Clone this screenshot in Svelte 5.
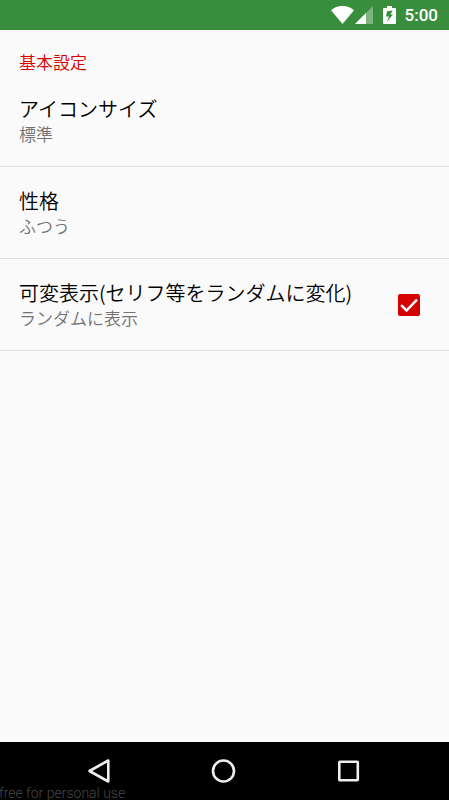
<script lang="js">
	let randomDisplay = true;

	const items = [
		{ title: 'アイコンサイズ', summary: '標準' },
		{ title: '性格', summary: 'ふつう' }
	];
</script>

<div class="screen">
	<header class="status">
		<svg class="wifi" width="23" height="18" viewBox="0 0 23 18" aria-hidden="true">
			<path d="M11.5 18L0 4.2C3 1.6 7 0 11.5 0S20 1.6 23 4.2z" />
		</svg>
		<svg class="signal" width="18" height="18" viewBox="0 0 18 18" aria-hidden="true">
			<path class="faint" d="M18 0v18H0z" />
			<path d="M11 7v11H0z" />
		</svg>
		<svg class="battery" width="13" height="18" viewBox="0 0 13 18" aria-hidden="true">
			<path
				fill-rule="evenodd"
				d="M4 0h5v2h3q1 0 1 1v14q0 1-1 1H1q-1 0-1-1V3q0-1 1-1h3zM9.5 4.6L4 5.2 3 10.6h3l-2 5.2L10 8.4H7.6z"
			/>
		</svg>
		<time>5:00</time>
	</header>

	<main>
		<h1>基本設定</h1>
		{#each items as item}
			<button class="row" type="button">
				<span class="texts">
					<span class="title">{item.title}</span>
					<span class="summary">{item.summary}</span>
				</span>
			</button>
		{/each}
		<label class="row">
			<span class="texts">
				<span class="title">可変表示(セリフ等をランダムに変化)</span>
				<span class="summary">ランダムに表示</span>
			</span>
			<span class="check">
				<input type="checkbox" bind:checked={randomDisplay} />
				{#if randomDisplay}
					<svg width="22" height="22" viewBox="0 0 22 22" aria-hidden="true">
						<path d="M3.2 11.2l5.3 5.3L19 5.6" />
					</svg>
				{/if}
			</span>
		</label>
	</main>

	<nav>
		<button type="button" aria-label="戻る">
			<svg width="26" height="26" viewBox="0 0 26 26">
				<path d="M22.3 2.5v21L3.5 13z" />
			</svg>
		</button>
		<button type="button" aria-label="ホーム">
			<svg width="26" height="26" viewBox="0 0 26 26">
				<circle cx="12.5" cy="13" r="10.5" />
			</svg>
		</button>
		<button type="button" aria-label="履歴">
			<svg width="26" height="26" viewBox="0 0 26 26">
				<rect x="3.3" y="3.8" width="18.5" height="18.5" rx="0.5" />
			</svg>
		</button>
		<span class="watermark">free for personal use</span>
	</nav>
</div>

<style>
	:global(body) {
		background: #fafafa;
	}
	.screen {
		display: flex;
		flex-direction: column;
		min-height: 100vh;
		background: #fafafa;
		font-family: Roboto, 'Noto Sans CJK JP', sans-serif;
	}
	.status {
		display: flex;
		align-items: center;
		justify-content: flex-end;
		height: 30px;
		padding-right: 11px;
		background: #388e3c;
		color: #fff;
	}
	.status svg {
		fill: #fff;
	}
	.faint {
		opacity: 0.35;
	}
	.signal {
		margin: 0 10px 0 1px;
	}
	.battery {
		margin-right: 9px;
	}
	time {
		font-size: 17px;
		font-weight: 500;
		line-height: 30px;
	}
	main {
		flex: 1;
	}
	h1 {
		margin: 0;
		padding: 20px 19px 1px;
		color: #d50000;
		font-family: 'Noto Sans CJK JP', sans-serif;
		font-size: 17px;
		font-weight: 350;
		line-height: 24px;
	}
	.row {
		display: flex;
		align-items: center;
		justify-content: space-between;
		box-sizing: border-box;
		width: 100%;
		min-height: 92px;
		padding: 0 29px 0 19px;
		border: 0;
		border-bottom: 1px solid #dedede;
		background: none;
		font-family: 'Noto Sans CJK JP', sans-serif;
		font-weight: 350;
		text-align: left;
	}
	.texts {
		display: flex;
		flex-direction: column;
	}
	.title {
		color: #000;
		font-size: 20px;
		line-height: 27px;
	}
	.summary {
		color: #737373;
		font-size: 17px;
		line-height: 24px;
	}
	.check {
		position: relative;
		width: 22px;
		height: 22px;
	}
	.check input {
		appearance: none;
		display: block;
		width: 22px;
		height: 22px;
		margin: 0;
		border: 2px solid #737373;
		border-radius: 2px;
	}
	.check input:checked {
		border-color: #d50000;
		background: #d50000;
	}
	.check svg {
		position: absolute;
		inset: 0;
		fill: none;
		stroke: #fff;
		stroke-width: 2.5;
		pointer-events: none;
	}
	nav {
		position: relative;
		display: grid;
		grid-template-columns: repeat(3, 1fr);
		height: 58px;
		padding: 0 38px 0 36px;
		background: #000;
	}
	nav button {
		display: flex;
		align-items: center;
		justify-content: center;
		padding: 0;
		border: 0;
		background: none;
	}
	nav svg {
		fill: none;
		stroke: #eee;
		stroke-width: 2.6;
		stroke-linejoin: round;
	}
	.watermark {
		position: absolute;
		bottom: -1px;
		left: -1px;
		color: #484848;
		font-size: 14px;
		font-weight: 300;
		line-height: 16px;
	}
</style>
